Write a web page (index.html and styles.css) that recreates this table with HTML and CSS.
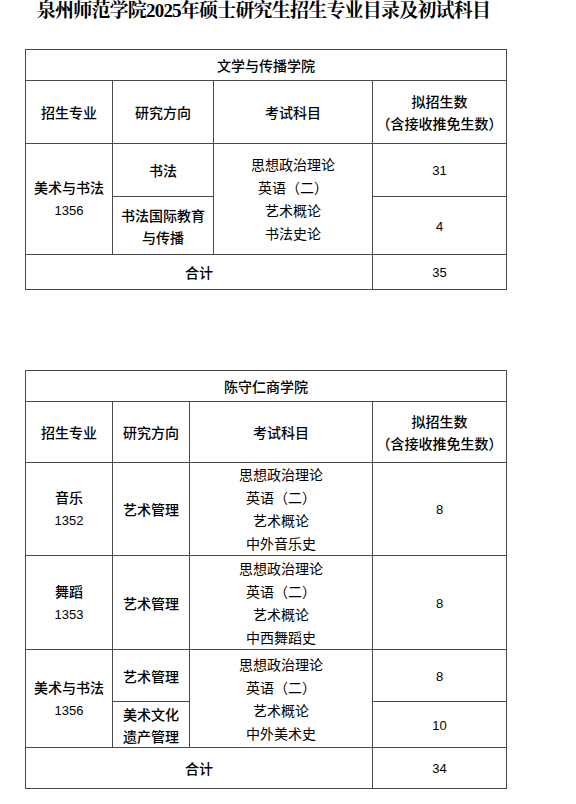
FILE: index.html
```html
<!DOCTYPE html>
<html lang="zh-CN">
<head>
<meta charset="utf-8">
<title>泉州师范学院2025年硕士研究生招生专业目录及初试科目</title>
<link rel="stylesheet" href="styles.css">
</head>
<body>
<div class="page">
  <h1 class="title">泉州师范学院<span class="tnum">2025</span>年硕士研究生招生专业目录及初试科目</h1>

  <table class="grid t1">
    <colgroup><col class="c1"><col class="c2a"><col class="c3a"><col class="c4"></colgroup>
    <tr class="h31"><td colspan="4">文学与传播学院</td></tr>
    <tr class="h63"><td>招生专业</td><td>研究方向</td><td>考试科目</td><td>拟招生数<br>（含接收推免生数）</td></tr>
    <tr class="h53">
      <td rowspan="2">美术与书法<br><span class="num">1356</span></td>
      <td>书法</td>
      <td rowspan="2" class="subj">思想政治理论<br>英语（二）<br>艺术概论<br>书法史论</td>
      <td><span class="num">31</span></td>
    </tr>
    <tr class="h58"><td>书法国际教育<br>与传播</td><td><span class="num">4</span></td></tr>
    <tr class="h35"><td colspan="3">合计</td><td><span class="num">35</span></td></tr>
  </table>

  <table class="grid t2">
    <colgroup><col class="c1"><col class="c2b"><col class="c3b"><col class="c4"></colgroup>
    <tr class="h31"><td colspan="4">陈守仁商学院</td></tr>
    <tr class="h61"><td>招生专业</td><td>研究方向</td><td>考试科目</td><td>拟招生数<br>（含接收推免生数）</td></tr>
    <tr class="h93">
      <td>音乐<br><span class="num">1352</span></td>
      <td>艺术管理</td>
      <td class="subj">思想政治理论<br>英语（二）<br>艺术概论<br>中外音乐史</td>
      <td><span class="num">8</span></td>
    </tr>
    <tr class="h94">
      <td>舞蹈<br><span class="num">1353</span></td>
      <td>艺术管理</td>
      <td class="subj">思想政治理论<br>英语（二）<br>艺术概论<br>中西舞蹈史</td>
      <td><span class="num">8</span></td>
    </tr>
    <tr class="h52">
      <td rowspan="2">美术与书法<br><span class="num">1356</span></td>
      <td>艺术管理</td>
      <td rowspan="2" class="subj">思想政治理论<br>英语（二）<br>艺术概论<br>中外美术史</td>
      <td><span class="num">8</span></td>
    </tr>
    <tr class="h46"><td>美术文化<br>遗产管理</td><td><span class="num">10</span></td></tr>
    <tr class="h41"><td colspan="3">合计</td><td><span class="num">34</span></td></tr>
  </table>
</div>
</body>
</html>
```

FILE: styles.css
```css
html, body {
  margin: 0;
  padding: 0;
  background: #ffffff;
}

body {
  font-family: "Noto Sans CJK SC", "Noto Sans", sans-serif;
  color: #000000;
}

.page {
  width: 481px;
  padding-left: 25px;
}

.title {
  margin: 0 -38px 27px -42px;
  height: 22px;
  line-height: 21px;
  font-size: 19px;
  font-weight: 700;
  text-align: center;
  white-space: nowrap;
  font-family: "Liberation Serif", "Noto Serif CJK SC", "Noto Sans CJK SC", serif;
  letter-spacing: -0.8px;
}

.tnum {
  font-family: "Liberation Serif", serif;
  font-weight: 700;
}

.grid {
  width: 481px;
  table-layout: fixed;
  border-collapse: collapse;
  font-size: 14px;
  font-weight: 500;
  line-height: 22px;
}

.grid td {
  border: 1px solid #4a4a4a;
  padding: 0;
  text-align: center;
  vertical-align: middle;
}

.grid .subj {
  line-height: 23px;
  font-weight: 400;
}

.num {
  font-family: "Liberation Sans", Arial, sans-serif;
  font-size: 13px;
  font-weight: 400;
}

.t2 {
  margin-top: 80px;
}

.c1 { width: 87px; }
.c2a { width: 101px; }
.c3a { width: 159px; }
.c2b { width: 77px; }
.c3b { width: 183px; }
.c4 { width: 134px; }

.h31 { height: 31px; }
.h63 { height: 63px; }
.h53 { height: 53px; }
.h58 { height: 58px; }
.h35 { height: 35px; }
.h61 { height: 61px; }
.h93 { height: 93px; }
.h94 { height: 94px; }
.h52 { height: 52px; }
.h46 { height: 46px; }
.h41 { height: 41px; }
```
